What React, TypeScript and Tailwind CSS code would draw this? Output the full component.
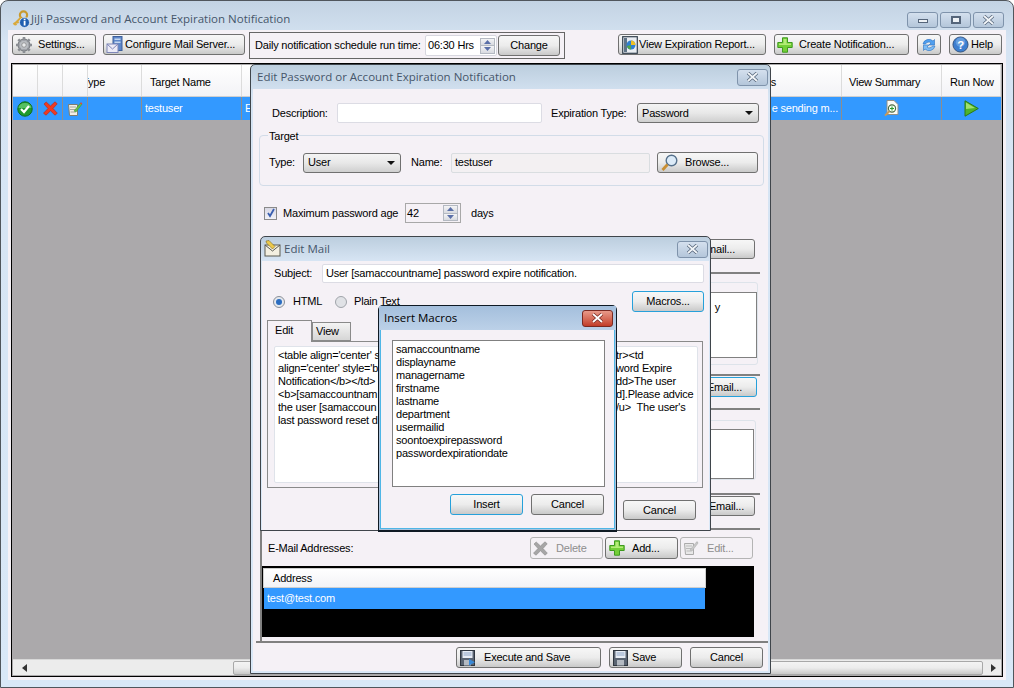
import React from "react";

const Key = () => (
  <svg width="18" height="18" viewBox="0 0 18 18" className="shrink-0">
    <circle cx="11.5" cy="5" r="3.6" fill="none" stroke="#c99a2e" strokeWidth="2.2" />
    <path d="M9 7.5 L2.5 14 L1.5 13 M5 11.5 L6.5 13 M3 13.5 L4.5 15" fill="none" stroke="#d9a93a" strokeWidth="2" />
    <circle cx="12.5" cy="12.5" r="5" fill="#1f5fb0" stroke="#dfe9f5" strokeWidth="0.8" />
    <rect x="11.7" y="11" width="1.8" height="4.5" fill="#fff" />
    <rect x="11.7" y="8.7" width="1.8" height="1.6" fill="#fff" />
  </svg>
);
const Gear = () => (
  <svg width="18" height="18" viewBox="0 0 18 18" className="shrink-0">
    <circle cx="9" cy="9" r="6" fill="#a4a7ac" stroke="#6d7076" />
    <path d="M9 1v16M1 9h16M3.3 3.3l11.4 11.4M14.7 3.3 3.3 14.7" stroke="#8b8e94" strokeWidth="2.6" />
    <circle cx="9" cy="9" r="4.6" fill="#b9bcc1" />
    <circle cx="9" cy="9" r="2.2" fill="#e9eaec" stroke="#777" strokeWidth="0.6" />
  </svg>
);
const MailServer = () => (
  <svg width="18" height="18" viewBox="0 0 18 18" className="shrink-0">
    <rect x="7" y="0.5" width="9" height="14" fill="#5d86c9" stroke="#3f5f9a" />
    <rect x="8.5" y="2.5" width="6" height="1.5" fill="#c3d6f0" />
    <rect x="8.5" y="5.5" width="6" height="1.5" fill="#c3d6f0" />
    <rect x="1" y="8" width="11" height="8.5" fill="#eceaf6" stroke="#7f86b8" />
    <path d="M1 8l5.5 5L12 8" fill="none" stroke="#7f86b8" />
  </svg>
);
const Report = () => (
  <svg width="16" height="18" viewBox="0 0 16 18" className="shrink-0">
    <rect x="0.7" y="0.7" width="14.6" height="16.6" fill="#e9edf2" stroke="#33404d" strokeWidth="1.2" />
    <rect x="2" y="2" width="3" height="14" fill="#5f7386" />
    <circle cx="9" cy="9" r="4.5" fill="#2f7fd0" />
    <path d="M9 4.5a4.5 4.5 0 0 1 4.5 4.5H9z" fill="#f0c020" />
    <path d="M5 10l4-1v4.5a4.5 4.5 0 0 1-4-3.5z" fill="#53a845" />
  </svg>
);
const Plus = () => (
  <svg width="16" height="16" viewBox="0 0 16 16" className="shrink-0">
    <path d="M5.5.8h5v4.7h4.7v5h-4.7v4.7h-5v-4.7H.8v-5h4.7z" fill="#74cf38" stroke="#3f9a1f" />
    <path d="M6.5 2h3v4.5H14v1.5H2V6.5h4.5z" fill="#b4ec78" />
  </svg>
);
const Refresh = () => (
  <svg width="16" height="16" viewBox="0 0 16 16">
    <path d="M2 7a6 6 0 0 1 10-3l1.5-1.5V8H8l2-2a3.5 3.5 0 0 0-5.5 1z" fill="#4f9ff0" stroke="#2b70c0" strokeWidth="0.6" />
    <path d="M14 9a6 6 0 0 1-10 3l-1.5 1.5V8H8l-2 2a3.5 3.5 0 0 0 5.5-1z" fill="#7dbcf5" stroke="#2b70c0" strokeWidth="0.6" />
  </svg>
);
const Help = () => (
  <svg width="17" height="17" viewBox="0 0 18 18" className="shrink-0">
    <circle cx="9" cy="9" r="8" fill="#3d7fd0" stroke="#33517a" />
    <circle cx="9" cy="6.5" r="5" fill="#7fb0e8" opacity="0.6" />
    <text x="9" y="13.5" textAnchor="middle" fontSize="12" fontWeight="700" fill="#fff" fontFamily="Liberation Sans, sans-serif">?</text>
  </svg>
);
const Check = () => (
  <svg width="16" height="16" viewBox="0 0 16 16">
    <circle cx="8" cy="8" r="7.2" fill="#1d9a2c" stroke="#0e6d1b" />
    <path d="M1.5 7a6.5 5 0 0 1 13 0z" fill="#6fd078" opacity="0.7" />
    <path d="M4 8l3 3 5-6" fill="none" stroke="#fff" strokeWidth="2.2" />
  </svg>
);
const RedX = ({ gray = false }: { gray?: boolean }) => (
  <svg width="15" height="15" viewBox="0 0 15 15" className="shrink-0">
    <path d="M1 3l2.2-2L7.5 5 12 .8l2.2 2L10 7.5l4.3 4.7-2.3 2-4.5-4.4-4.5 4.4L.5 12.2 5 7.5z" fill={gray ? "#a6a6a6" : "#ef3a22"} stroke={gray ? "#8c8c8c" : "#b82512"} strokeWidth="0.6" />
  </svg>
);
const EditNote = ({ gray = false }: { gray?: boolean }) => (
  <svg width="16" height="16" viewBox="0 0 16 16" className="shrink-0">
    <path d="M1.5 3.5l9 0v11h-8z" fill={gray ? "#e8e8e8" : "#f3efe4"} stroke={gray ? "#aaa" : "#7c7c72"} />
    <path d="M3 6h6M3 8.5h6M3.5 11h5" stroke={gray ? "#bbb" : "#a5a59a"} />
    <path d="M7 10l6.5-8 1.5 1.2L9 11z" fill={gray ? "#c8c8c8" : "#62c04a"} stroke={gray ? "#aaa" : "#3b8a2b"} strokeWidth="0.5" />
    <path d="M13 2.5l1-1.3 1.4 1.1-1 1.3z" fill={gray ? "#bbb" : "#e8483a"} />
  </svg>
);
const PageZoom = () => (
  <svg width="15" height="17" viewBox="0 0 15 17">
    <path d="M3 .5h7l4 4v10H3z" fill="#fbfbf6" stroke="#8f8f88" />
    <circle cx="8" cy="8.5" r="3.6" fill="#f4fff0" stroke="#4d6b45" strokeWidth="1.1" />
    <path d="M6 8.5h4M8 6.5v4" stroke="#2a9a2a" strokeWidth="1.1" />
    <path d="M5.4 11.2L1 15.6" stroke="#c99a5a" strokeWidth="2" />
  </svg>
);
const Play = () => (
  <svg width="15" height="17" viewBox="0 0 15 17">
    <path d="M1 .8v15.4L14.3 8.5z" fill="#4fb32a" stroke="#2c7a15" />
    <path d="M2 2.5v6.5L11 8z" fill="#a0e070" />
  </svg>
);
const Glass = () => (
  <svg width="17" height="18" viewBox="0 0 17 18" className="shrink-0">
    <circle cx="10.5" cy="6.5" r="5.3" fill="#dcebf8" stroke="#56718c" strokeWidth="1.4" />
    <path d="M6.5 10.5L1.5 16" stroke="#c98f34" strokeWidth="2.8" />
  </svg>
);
const Floppy = ({ play = false }: { play?: boolean }) => (
  <svg width="15" height="16" viewBox="0 0 15 16" className="shrink-0">
    <rect x="0.5" y="0.5" width="14" height="15" fill="#5a6472" stroke="#2f3640" />
    <rect x="2.5" y="1" width="10" height="7" fill="#e8edf5" />
    <path d="M3.5 3h8M3.5 5h8" stroke="#8ea5c6" />
    <rect x="4" y="10" width="7" height="5.5" fill="#b4bac2" />
    {play && <path d="M9 9v6.5l6-3.2z" fill="#3a8ad8" />}
  </svg>
);
const MailEdit = () => (
  <svg width="18" height="18" viewBox="0 0 18 18" className="shrink-0">
    <rect x="1" y="5" width="15" height="11" fill="#f3efe0" stroke="#5a5a50" />
    <path d="M1 5l7.5 6L16 5" fill="none" stroke="#5a5a50" />
    <path d="M2 1l3-.5 6 6-2.5 2.5-6-6z" fill="#ecc94a" stroke="#7d6a20" strokeWidth="0.6" />
  </svg>
);
const XGlyph = ({ color = "#f2f5f8", edge = "#55657a" }: { color?: string; edge?: string }) => (
  <svg width="13" height="10" viewBox="0 0 13 10">
    <path d="M2 1l9 8M11 1l-9 8" stroke={edge} strokeWidth="3.4" />
    <path d="M2 1l9 8M11 1l-9 8" stroke={color} strokeWidth="1.8" />
  </svg>
);
const Arrow = ({ up }: { up: boolean }) => (
  <svg width="7" height="4" viewBox="0 0 7 4">
    <path d={up ? "M0 4L3.5 0 7 4z" : "M0 0h7L3.5 4z"} fill="#5a6fa8" />
  </svg>
);
const Spin = () => (
  <div className="flex flex-col w-[15px] h-[16px] border border-[#b4b9c2] shrink-0">
    <div className="flex-1 flex items-center justify-center bg-gradient-to-b from-[#f4f4f6] to-[#d8dae0] border-b border-[#b4b9c2]"><Arrow up /></div>
    <div className="flex-1 flex items-center justify-center bg-gradient-to-b from-[#f4f4f6] to-[#d8dae0]"><Arrow up={false} /></div>
  </div>
);

const Btn = ({ className = "", children, focus = false, disabled = false }: { className?: string; children: React.ReactNode; focus?: boolean; disabled?: boolean }) => (
  <div
    className={`h-[21px] shrink-0 flex items-center justify-center rounded-[3px] border whitespace-nowrap ${
      disabled
        ? "border-[#b4b4b4] bg-[#f4f1f5] text-[#8e8e8e]"
        : focus
        ? "border-[#26a0da] bg-gradient-to-b from-[#f7f7f7] via-[#ececec] to-[#c9c9c9]"
        : "border-[#707070] bg-gradient-to-b from-[#f7f7f7] via-[#ececec] to-[#c9c9c9]"
    } ${className}`}
  >
    {children}
  </div>
);

const Combo = ({ className, children }: { className: string; children: React.ReactNode }) => (
  <div className={`h-[20px] flex items-center justify-between pl-[4px] pr-[5px] rounded-[3px] border border-[#707070] bg-gradient-to-b from-[#f4f4f4] via-[#e8e8e8] to-[#cfcfcf] ${className}`}>
    <span>{children}</span>
    <svg width="8" height="4" viewBox="0 0 8 4"><path d="M0 0h8L4 4z" fill="#111" /></svg>
  </div>
);

const CloseBtn = ({ className = "" }: { className?: string }) => (
  <div className={`flex items-center justify-center rounded-[3px] border border-[#7f93ab] bg-gradient-to-b from-[#d4e0ee] to-[#b4c6da] ${className}`}>
    <XGlyph />
  </div>
);

const Rule = ({ className = "" }: { className?: string }) => <div className={`h-[2px] bg-[#808080] ${className}`} />;

const macros = ["samaccountname", "displayname", "managername", "firstname", "lastname", "department", "usermailid", "soontoexpirepassword", "passwordexpirationdate"];
const mailLines: [string, string][] = [
  ["<table align='center' s", "tr><td"],
  ["align='center' style='b", "word Expire"],
  ["Notification</b></td>", "dd>The user"],
  ["<b>[samaccountnam", "d].Please advice"],
  ["the user [samaccoun", "/u>  The user's"],
  ["last password reset d", ""],
];

const headCell = "h-full flex items-center pt-[3px] border-r border-[#dcdcdc] overflow-hidden shrink-0 whitespace-nowrap";
const rowCell = "h-full flex items-center justify-center border-r border-[#8d8d8d] overflow-hidden shrink-0 whitespace-nowrap";

export default function App() {
  return (
    <div className="relative w-[1014px] h-[688px] overflow-hidden font-['Liberation_Sans',Arial,sans-serif] text-[11px] tracking-[-0.2px] text-black">
      {/* main window */}
      <div className="w-full h-full flex flex-col rounded-t-[8px] border border-[#50565c] bg-gradient-to-b from-[#c3d3e3] via-[#d6e4f3] via-[6%] to-[#d9e8f7]">
        <div className="h-[29px] shrink-0 flex items-center pl-[11px] pr-[9px]">
          <div className="mt-[6px]"><Key /></div>
          <span className="ml-[1px] font-['Open_Sans',sans-serif] text-[11.5px] tracking-normal text-[#46566a] mt-[6px]">JiJi Password and Account Expiration Notification</span>
          <div className="ml-auto flex gap-[2px] mt-[8px]">
            <div className="w-[31px] h-[16px] flex items-center justify-center rounded-[3px] border border-[#7f93ab] bg-gradient-to-b from-[#d4e0ee] to-[#b4c6da]"><div className="w-[10px] h-[4px] mt-[3px] bg-[#eef2f6] border border-[#55657a]" /></div>
            <div className="w-[31px] h-[16px] flex items-center justify-center rounded-[3px] border border-[#7f93ab] bg-gradient-to-b from-[#d4e0ee] to-[#b4c6da]"><div className="w-[10px] h-[8px] border-2 border-[#55657a] bg-[#eef2f6]" /></div>
            <CloseBtn className="w-[31px] h-[16px]" />
          </div>
        </div>
        <div className="flex-1 flex flex-col mx-[7px] mb-[7px] bg-[#f5f1f6] px-[3px]">
          {/* toolbar */}
          <div className="h-[33px] shrink-0 flex items-start pt-[2px]">
            <Btn className="w-[84px] mt-[2px] ml-[1px] gap-[5px] !justify-start pl-[2px]"><Gear />Settings...</Btn>
            <Btn className="w-[142px] mt-[2px] ml-[7px] gap-[1px] !justify-start pl-[2px]"><MailServer />Configure Mail Server...</Btn>
            <div className="w-[316px] h-[27px] ml-[4px] border border-[#666] flex items-center pl-[5px]">
              <span className="w-[170px] shrink-0 whitespace-nowrap">Daily notification schedule run time:</span>
              <div className="w-[72px] h-[21px] shrink-0 bg-white border border-[#d7d7df] rounded-[2px] flex items-center justify-between pl-[2px] pr-[1px] whitespace-nowrap">
                <span>06:30 Hrs</span>
                <Spin />
              </div>
              <Btn className="w-[62px] ml-[1px]">Change</Btn>
            </div>
            <Btn className="w-[148px] mt-[2px] ml-[53px] gap-[1px] !justify-start pl-[3px]"><Report />View Expiration Report...</Btn>
            <Btn className="w-[135px] mt-[2px] ml-[8px] gap-[6px] !justify-start pl-[2px]"><Plus />Create Notification...</Btn>
            <Btn className="w-[24px] mt-[2px] ml-[8px]"><Refresh /></Btn>
            <Btn className="w-[53px] mt-[2px] ml-[8px] gap-[2px] !justify-start pl-[2px]"><Help />Help</Btn>
          </div>
          {/* grid */}
          <div className="w-[992px] h-[614px] flex flex-col border border-black bg-[#aba9ab] p-[1px]">
            <div className="h-[32px] shrink-0 flex bg-gradient-to-b from-white to-[#f3f3f6] border-b border-[#cfcfcf]">
              <div className={`${headCell} w-[25px]`} />
              <div className={`${headCell} w-[25px]`} />
              <div className={`${headCell} w-[25px]`} />
              <div className={`${headCell} w-[54px]`}><span className="-ml-[6px]">Type</span></div>
              <div className={`${headCell} w-[100px] pl-[8px]`}>Target Name</div>
              <div className={`${headCell} w-[499px]`} />
              <div className={`${headCell} w-[101px] pl-[5px]`}>Status</div>
              <div className={`${headCell} w-[100px] pl-[7px]`}>View Summary</div>
              <div className={`${headCell} flex-1 pl-[8px]`}>Run Now</div>
            </div>
            <div className="h-[23px] shrink-0 flex bg-[#3399ff] text-white">
              <div className={`${rowCell} w-[25px]`}><Check /></div>
              <div className={`${rowCell} w-[25px]`}><RedX /></div>
              <div className={`${rowCell} w-[25px]`}><EditNote /></div>
              <div className={`${rowCell} w-[54px]`} />
              <div className={`${rowCell} w-[100px] !justify-start pl-[3px]`}>testuser</div>
              <div className={`${rowCell} w-[499px] !justify-start pl-[3px]`}>E</div>
              <div className={`${rowCell} w-[101px] !justify-end pr-[3px]`}>e sending m...</div>
              <div className={`${rowCell} w-[100px]`}><PageZoom /></div>
              <div className={`${rowCell} flex-1 border-r-0`}><Play /></div>
            </div>
            <div className="flex-1" />
            <div className="h-[16px] shrink-0 flex items-center border-t border-[#d8d8d8] bg-[#ececec]">
              <div className="w-[16px] ml-[3px] flex justify-center"><svg width="5" height="8" viewBox="0 0 5 8"><path d="M5 0v8L0 4z" fill="#333" /></svg></div>
              <div className="ml-[201px] w-[750px] h-[14px] rounded-[2px] border border-[#a8a8a8] bg-gradient-to-b from-[#f4f4f4] via-[#ececec] to-[#c8c8c8]" />
              <div className="ml-auto mr-[5px] w-[5px]"><svg width="5" height="8" viewBox="0 0 5 8"><path d="M0 0v8l5-4z" fill="#333" /></svg></div>
            </div>
          </div>
        </div>
      </div>

      {/* Edit notification window */}
      <div className="absolute left-[250px] top-[64px] w-[521px] h-[610px] flex flex-col rounded-t-[5px] border border-[#3f454b] bg-gradient-to-b from-[#bccede] via-[#d6e4f3] via-[5%] to-[#d9e8f7]">
        <div className="h-[24px] shrink-0 flex items-center pl-[6px] pr-[2px]">
          <span className="font-['Open_Sans',sans-serif] text-[11.5px] tracking-normal text-[#46566a]">Edit Password or Account Expiration Notification</span>
          <CloseBtn className="ml-auto w-[31px] h-[17px]" />
        </div>
        <div className="flex-1 mx-[2px] mb-[2px] flex flex-col bg-[#f5f1f6]">
          <div className="flex items-center mt-[14px] pl-[19px] h-[20px] shrink-0">
            <span className="w-[65px]">Description:</span>
            <div className="w-[205px] h-[20px] bg-white border border-[#dcdce4] rounded-[2px]" />
            <span className="ml-[9px] w-[86px]">Expiration Type:</span>
            <Combo className="w-[122px]">Password</Combo>
          </div>
          <div className="relative mt-[12px] ml-[6px] mr-[4px] h-[51px] shrink-0 flex items-center border border-[#d2dce8] rounded-[4px] pl-[9px] pt-[4px]">
            <span className="absolute -top-[8px] left-[8px] px-[1px] bg-[#f5f1f6]">Target</span>
            <span className="w-[34px]">Type:</span>
            <Combo className="w-[98px]">User</Combo>
            <span className="ml-[10px] w-[40px]">Name:</span>
            <div className="w-[199px] h-[20px] flex items-center pl-[3px] bg-[#f3f0f2] border border-[#d9dde0] rounded-[2px]">testuser</div>
            <Btn className="w-[101px] ml-[7px] gap-[7px] !justify-start pl-[3px]"><Glass />Browse...</Btn>
          </div>
          <div className="flex items-center mt-[17px] h-[20px] pl-[11px] shrink-0">
            <div className="w-[13px] h-[13px] flex items-center justify-center border border-[#8a8a8a] bg-gradient-to-b from-[#d8d8e4] to-[#f2f2f8]">
              <svg width="10" height="10" viewBox="0 0 10 10"><path d="M2 5l2 3 4-7" fill="none" stroke="#3a5fb0" strokeWidth="1.8" /></svg>
            </div>
            <span className="ml-[6px] w-[122px] whitespace-nowrap">Maximum password age</span>
            <div className="w-[56px] h-[20px] flex items-center justify-between pl-[1px] pr-[2px] border border-[#a8a8a8] bg-[#f5f1f6]">
              <span>42</span>
              <Spin />
            </div>
            <span className="ml-[10px]">days</span>
          </div>
          <div className="flex justify-end mt-[16px] pr-[13px] shrink-0"><Btn className="w-[100px] !h-[20px] !justify-end pr-[19px]">Email...</Btn></div>
          <Rule className="mt-[13px] ml-[7px] mr-[8px] shrink-0" />
          <div className="mt-[8px] ml-[7px] mr-[10px] h-[83px] shrink-0 border border-[#dde3ea] rounded-[3px] pt-[9px]">
            <div className="h-[66px] bg-white border border-[#808080] flex justify-end pr-[36px] pt-[6px]"><span>y</span></div>
          </div>
          <Rule className="mt-[9px] ml-[7px] mr-[8px] shrink-0" />
          <div className="flex justify-end mt-[1px] pr-[11px] shrink-0"><Btn className="w-[100px] !h-[20px] !justify-end pr-[14px]" focus>Email...</Btn></div>
          <Rule className="mt-[11px] ml-[7px] mr-[8px] shrink-0" />
          <div className="mt-[10px] ml-[7px] mr-[12px] h-[60px] shrink-0 border border-[#dde3ea] rounded-[3px] pt-[8px] pr-[1px]">
            <div className="h-[50px] bg-white border border-[#808080]" />
          </div>
          <Rule className="mt-[13px] ml-[7px] mr-[8px] shrink-0" />
          <div className="flex justify-end mt-[1px] pr-[13px] shrink-0"><Btn className="w-[100px] !h-[20px] !justify-end pr-[10px]">Email...</Btn></div>
          <div className="mt-[12px] ml-[7px] mr-[8px] h-[113px] shrink-0 border-t-2 border-l-2 border-[#808080] flex flex-col">
            <div className="flex items-center mt-[7px] h-[22px] shrink-0 pl-[6px] pr-[7px]">
              <span>E-Mail Addresses:</span>
              <div className="ml-auto flex gap-[2px]">
                <Btn className="w-[73px] gap-[8px] !h-[22px] !justify-start pl-[2px]" disabled><RedX gray />Delete</Btn>
                <Btn className="w-[73px] gap-[7px] !h-[22px] !justify-start pl-[3px]"><Plus />Add...</Btn>
                <Btn className="w-[73px] gap-[8px] !h-[22px] !justify-start pl-[2px]" disabled><EditNote gray />Edit...</Btn>
              </div>
            </div>
            <div className="mt-[7px] w-[492px] h-[71px] shrink-0 bg-black pt-[2px] pl-[1px]">
              <div className="w-[443px] h-[20px] flex items-center pl-[9px] bg-gradient-to-b from-white to-[#f3f3f6] border border-[#cfcfcf]">Address</div>
              <div className="w-[441px] h-[21px] ml-[1px] flex items-center pl-[3px] bg-[#3399ff] text-white">test@test.com</div>
            </div>
          </div>
          <Rule className="ml-[3px] shrink-0" />
          <div className="flex justify-end mt-[4px] pr-[5px] gap-[8px] shrink-0">
            <Btn className="w-[145px] gap-[9px] !justify-start pl-[3px]"><Floppy play />Execute and Save</Btn>
            <Btn className="w-[73px] gap-[4px] !justify-start pl-[3px]"><Floppy />Save</Btn>
            <Btn className="w-[73px]">Cancel</Btn>
          </div>
        </div>
      </div>

      {/* Edit Mail window */}
      <div className="absolute left-[260px] top-[236px] w-[451px] h-[295px] flex flex-col rounded-t-[5px] border border-[#3f454b] bg-gradient-to-b from-[#bccede] via-[#d6e4f3] via-[8%] to-[#d9e8f7]">
        <div className="h-[24px] shrink-0 flex items-center pl-[3px] pr-[2px]">
          <MailEdit />
          <span className="ml-[2px] font-['Open_Sans',sans-serif] text-[11.5px] tracking-normal text-[#46566a]">Edit Mail</span>
          <CloseBtn className="ml-auto w-[31px] h-[17px]" />
        </div>
        <div className="flex-1 mx-[1px] flex flex-col bg-[#f5f1f6] pl-[5px] pr-[5px]">
          <div className="flex items-center h-[19px] mt-[3px] shrink-0">
            <span className="ml-[7px] w-[48px]">Subject:</span>
            <div className="w-[383px] h-[19px] flex items-center pl-[3px] bg-white border border-[#dcdce4] rounded-[2px]">User [samaccountname] password expire notification.</div>
          </div>
          <div className="flex items-center h-[21px] mt-[8px] shrink-0">
            <div className="ml-[6px] w-[12px] h-[12px] rounded-full border border-[#8a8f98] bg-[#e4e8ee] flex items-center justify-center"><div className="w-[6px] h-[6px] rounded-full bg-[#2a6cc0]" /></div>
            <span className="ml-[8px] w-[31px]">HTML</span>
            <div className="ml-[11px] w-[12px] h-[12px] rounded-full border border-[#a0a4aa] bg-[#e0e2e6]" />
            <span className="ml-[7px]">Plain Text</span>
            <Btn className="ml-auto w-[72px]" focus>Macros...</Btn>
          </div>
          <div className="flex items-end h-[21px] mt-[8px] shrink-0">
            <div className="w-[45px] h-[22px] -mb-[1px] z-10 flex items-center pl-[7px] pb-[2px] bg-[#f5f1f6] border border-b-0 border-[#8a8a8a]">Edit</div>
            <div className="w-[39px] h-[19px] flex items-center pl-[3px] border border-[#8a8a8a] bg-gradient-to-b from-[#f4f4f4] to-[#d6d6d6]">View</div>
          </div>
          <div className="w-[436px] h-[147px] shrink-0 border border-[#8a8a8a] p-[4px] pl-[6px]">
            <div className="w-[424px] h-[137px] bg-white border border-[#dfe3ea] rounded-[2px] pl-[3px] pt-[2px] leading-[13px]">
              {mailLines.map(([a, b]) => (
                <div key={a} className="flex h-[13px] whitespace-pre">
                  <span className="w-[338px] shrink-0 overflow-hidden">{a}</span>
                  <span>{b}</span>
                </div>
              ))}
            </div>
          </div>
          <div className="flex justify-end mt-[12px] pr-[8px] shrink-0"><Btn className="w-[73px] !h-[20px]">Cancel</Btn></div>
        </div>
      </div>

      {/* Insert Macros window */}
      <div className="absolute left-[378px] top-[305px] w-[239px] h-[227px] flex flex-col rounded-t-[5px] border border-[#0f1a24] border-b-2 bg-[#a9c3de]">
        <div className="h-[24px] shrink-0 flex items-center pl-[5px] pr-[3px] bg-gradient-to-b from-[#a4bfdc] to-[#bcd1e8]">
          <span className="font-['Open_Sans',sans-serif] text-[11.5px] tracking-normal text-black">Insert Macros</span>
          <div className="ml-auto w-[31px] h-[17px] flex items-center justify-center rounded-[3px] border border-[#7a2a22] bg-gradient-to-b from-[#e89a8a] to-[#c23c28]"><XGlyph color="#ffffff" edge="#7a2a22" /></div>
        </div>
        <div className="flex-1 mx-[1px] mb-[1px] flex flex-col items-start bg-[#f5f1f6] border-x border-b border-[#4fb6e6] pl-[11px]">
          <div className="mt-[10px] w-[213px] h-[147px] shrink-0 bg-white border border-[#808080] pl-[3px] pt-[2px] leading-[13px]">
            {macros.map((m) => (<div key={m} className="h-[13px]">{m}</div>))}
          </div>
          <div className="flex mt-[7px] gap-[8px] self-end pr-[10px] shrink-0">
            <Btn className="w-[73px]" focus>Insert</Btn>
            <Btn className="w-[73px]">Cancel</Btn>
          </div>
        </div>
      </div>
    </div>
  );
}
